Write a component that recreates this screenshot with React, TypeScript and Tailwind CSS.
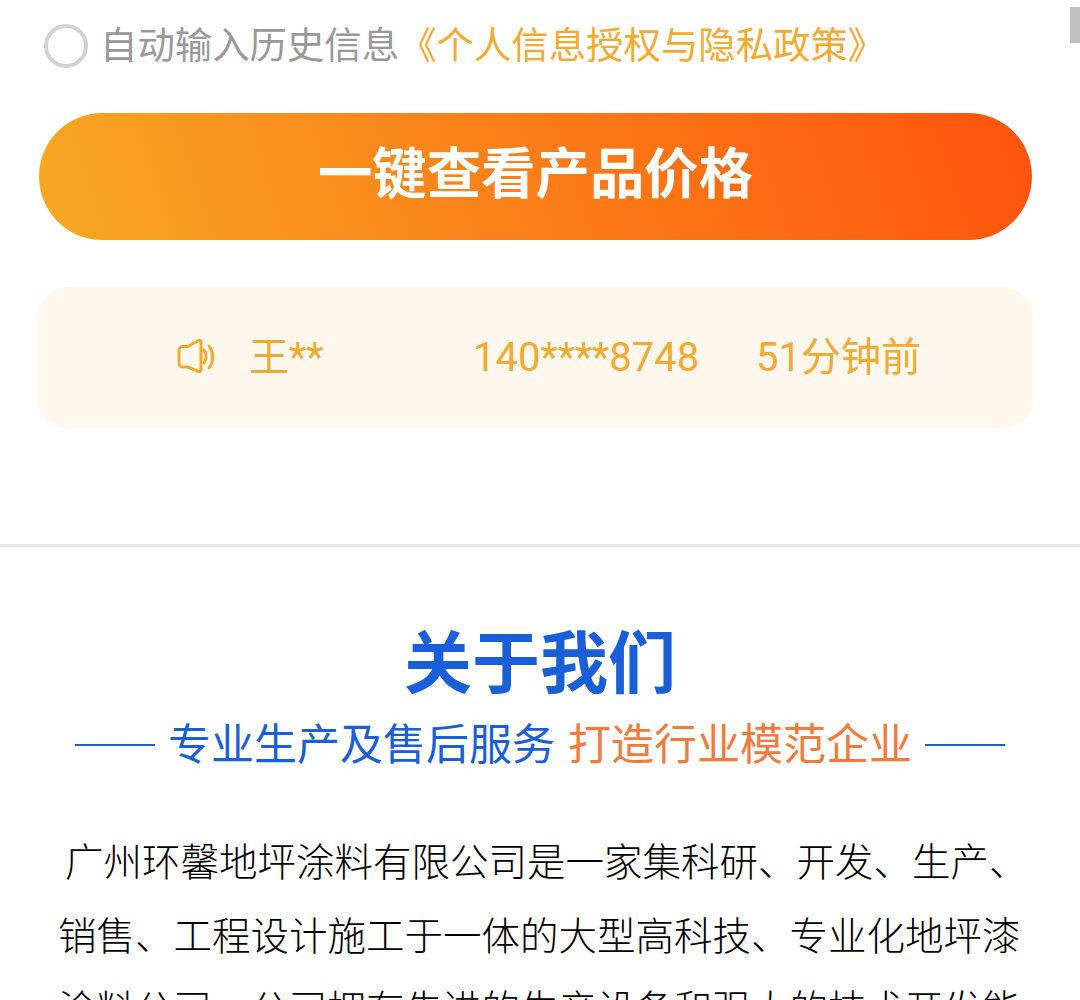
import React from 'react';

const cjk = 'font-["Roboto","Noto_Sans_CJK_SC",sans-serif]';

function SpeakerIcon() {
  return (
    <svg width="40" height="36" viewBox="0 0 40 36" fill="none" stroke="#f5a92f" strokeWidth="3" strokeLinecap="round" strokeLinejoin="round">
      <path d="M2 12c0-2 1.500-3.500 3.500-3.500H11L21 2.700c1.400-.8 3 .1 3 1.800v27c0 1.700-1.600 2.600-3 1.800L11 29H5.500C3.500 29 2 27.500 2 25.500z" />
      <path d="M27 12c2.800 3.800 2.800 9.200 0 13" />
      <path d="M32 8c4.800 6 4.800 16 0 22" />
    </svg>
  );
}

export default function App() {
  return (
    <div className={`${cjk} relative h-[1000px] w-[1080px] overflow-hidden bg-white`}>
      {/* Scrollbar thumb */}
      <div className="absolute right-0 top-[7px] h-[36px] w-[10px] bg-[#c1c1c1]" />

      {/* Agreement */}
      <div className="flex h-[91px] items-center pl-[44px]">
        <span className="h-[44px] w-[44px] shrink-0 rounded-full border-[4px] border-[#d2d2d2]" />
        <span className="ml-[12px] text-[37.400px] leading-[44px] text-[#999999]">自动输入历史信息</span>
        <span className="text-[37.400px] leading-[44px] text-[#f5a92f]">《个人信息授权与隐私政策》</span>
      </div>

      {/* Submit */}
      <div className="mt-[22px] px-[39px]">
        <button className="flex h-[127px] w-[993px] items-center justify-center rounded-[64px] bg-[linear-gradient(72deg,#f7a823,#ff530d)] pb-[4px] text-[54.400px] font-bold text-white">
          一键查看产品价格
        </button>
      </div>

      {/* Ticker */}
      <div className="mx-[37px] mt-[47px] flex h-[142px] w-[997px] items-center rounded-[32px] bg-[#fff8ef] text-[40px] text-[#f5a92f]">
        <div className="ml-[140px] flex w-[296px] items-center">
          <span className="mb-[4px] flex">
            <SpeakerIcon />
          </span>
          <span className="ml-[32px]">王**</span>
        </div>
        <span className="w-[283px]">140****8748</span>
        <span>51分钟前</span>
      </div>

      <div className="mt-[115px] h-[3px] bg-[#e5e5e5]" />

      {/* About */}
      <h2 className="mt-[71px] text-center text-[68px] font-bold leading-[94px] text-[#1a5fd8]">关于我们</h2>
      <div className="mt-[3px] flex items-center justify-center text-[43px] leading-[60px]">
        <span className="h-[2px] w-[80px] bg-[#1a5fd8]" />
        <span className="ml-[13px] text-[#1a5fd8]">专业生产及售后服务</span>
        <span className="ml-[13px] text-[#f4793b]">打造行业模范企业</span>
        <span className="ml-[13px] h-[2px] w-[80px] bg-[#1a5fd8]" />
      </div>

      <p className="ml-[58px] mt-[51px] w-[980px] indent-[7px] text-[38.500px] font-light leading-[73.500px] text-black">
        广州环馨地坪涂料有限公司是一家集科研、开发、生产、销售、工程设计施工于一体的大型高科技、专业化地坪漆涂料公司。公司拥有先进的生产设备和强大的技术开发能力
      </p>
    </div>
  );
}
